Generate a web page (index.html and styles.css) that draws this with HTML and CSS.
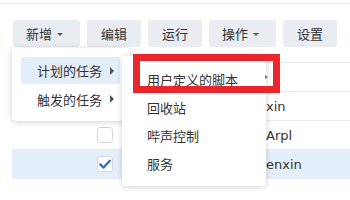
FILE: index.html
```html
<!DOCTYPE html>
<html lang="zh">
<head>
<meta charset="utf-8">
<link rel="stylesheet" href="styles.css">
</head>
<body>
<div class="page">
  <div class="topline"></div>
  <div class="toolbar">
    <div class="btn btn-drop">新增<span class="caret-down"></span></div>
    <div class="btn">编辑</div>
    <div class="btn">运行</div>
    <div class="btn btn-drop">操作<span class="caret-down"></span></div>
    <div class="btn">设置</div>
  </div>
  <div class="table">
    <div class="thead"></div>
    <div class="row"><span></span><span></span><span></span><span class="name"></span></div>
    <div class="row"><span></span><span class="cb"></span><span></span><span class="name">xin</span></div>
    <div class="row"><span></span><span class="cb"></span><span></span><span class="name">Arpl</span></div>
    <div class="row selected"><span></span><span class="cb checked"><svg viewBox="0 0 16 16" width="16" height="16"><path d="M3.2 8.4 L6.6 11.6 L12.8 4.8" fill="none" stroke="#2f6fbe" stroke-width="2.3" stroke-linecap="round" stroke-linejoin="round"/></svg></span><span></span><span class="name">enxin</span></div>
  </div>

  <div class="menu menu-main">
    <div class="item active">计划的任务<span class="caret-right"></span></div>
    <div class="item">触发的任务<span class="caret-right"></span></div>
  </div>
  <div class="menu menu-sub">
    <div class="item">用户定义的脚本<span class="caret-tiny"></span></div>
    <div class="item">回收站</div>
    <div class="item">哔声控制</div>
    <div class="item">服务</div>
  </div>
  <div class="highlight-box"></div>
</div>
</body>
</html>
```
FILE: styles.css
```css
html, body {
  margin: 0;
  padding: 0;
  background: #ffffff;
}
.page {
  position: relative;
  width: 350px;
  height: 200px;
  overflow: hidden;
  font-family: "DejaVu Sans", "Noto Sans CJK SC", sans-serif;
  font-size: 13px;
  color: #333333;
}
.topline {
  height: 3px;
  border-bottom: 1px solid #e9e9e9;
}
.toolbar {
  display: flex;
  gap: 7px;
  padding: 16px 0 0 13px;
}
.btn {
  display: flex;
  align-items: center;
  height: 27px;
  padding: 0 14px;
  background: #e9edf2;
  border-radius: 3px;
  font-family: "Noto Sans CJK SC", sans-serif;
  color: #333;
}
.btn-drop {
  padding: 0 17px 0 13px;
}
.caret-down {
  margin-left: 5px;
  width: 0;
  height: 0;
  border-left: 3px solid transparent;
  border-right: 3px solid transparent;
  border-top: 3px solid #555;
  margin-top: 1px;
}
.table {
  margin-left: 12px;
}
.thead {
  height: 15px;
  border-bottom: 1px solid #e6e6e6;
}
.row {
  display: grid;
  grid-template-columns: 85px 17px 152px 1fr;
  align-items: center;
  height: 28px;
  border-bottom: 1px solid #ebebeb;
}
.row.selected {
  background: #e4effb;
  border-bottom-color: transparent;
}
.cb {
  box-sizing: border-box;
  width: 16px;
  height: 16px;
  border: 1px solid #d6d6d6;
  border-radius: 3px;
  background: #fff;
  display: flex;
}
.cb svg {
  margin: -1px;
}
.name {
  color: #333;
  white-space: nowrap;
}
.menu {
  position: absolute;
  box-sizing: border-box;
  background: #fff;
  border-radius: 4px;
  box-shadow: 0 1px 6px rgba(0, 0, 0, 0.18);
  padding: 9px 9px 8px 9px;
  font-family: "Noto Sans CJK SC", sans-serif;
  z-index: 2;
}
.menu-main {
  left: 12px;
  top: 48px;
  width: 118px;
  height: 73px;
  padding-right: 10px;
}
.menu-sub {
  left: 122px;
  top: 56px;
  width: 144px;
  height: 130px;
  z-index: 3;
}
.item {
  position: relative;
  box-sizing: border-box;
  display: flex;
  align-items: center;
  height: 28px;
  padding-left: 16px;
  border-radius: 2px;
  color: #333;
}
.item.active {
  background: #e3eefa;
  height: 27px;
  margin-bottom: 1px;
}
.caret-right {
  margin-left: 8px;
  width: 0;
  height: 0;
  border-top: 4px solid transparent;
  border-bottom: 4px solid transparent;
  border-left: 4px solid #555;
}
.caret-tiny {
  position: absolute;
  right: -11px;
  top: 10px;
  width: 0;
  height: 0;
  border-top: 2px solid transparent;
  border-bottom: 2px solid transparent;
  border-left: 3px solid #777;
}
.highlight-box {
  position: absolute;
  box-sizing: border-box;
  left: 133px;
  top: 54px;
  width: 147px;
  height: 39px;
  border: 7px solid #e8262c;
  z-index: 4;
}
```
